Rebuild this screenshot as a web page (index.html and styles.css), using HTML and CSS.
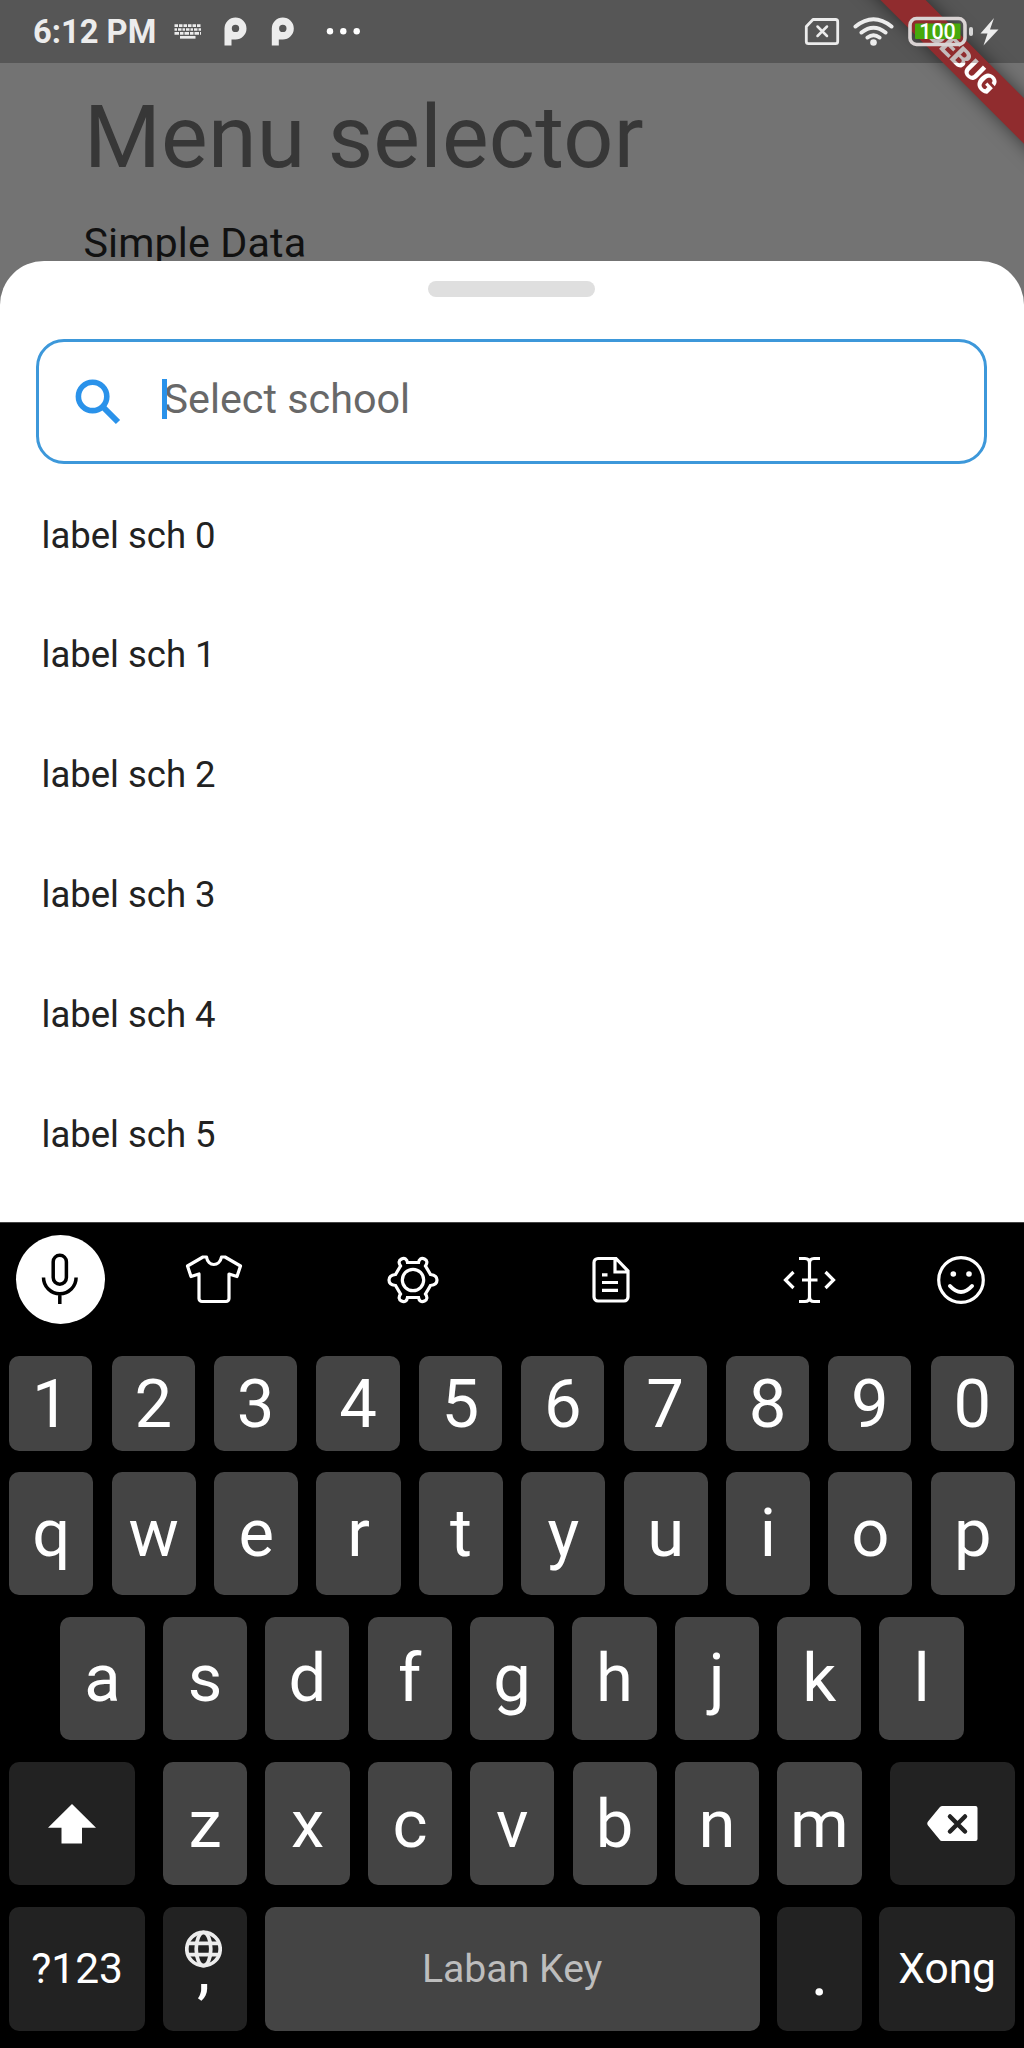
FILE: index.html
```html
<!DOCTYPE html>
<html lang="en">
<head>
<meta charset="utf-8">
<title>Menu selector</title>
<link rel="stylesheet" href="styles.css">
</head>
<body>
<div class="screen">
  <header class="status">
    <div class="debug-clip"><div class="debug"><span>DEBUG</span></div></div>
    <span class="time">6:12 PM</span>
    <svg class="status-left" width="190" height="32" viewBox="172 16 190 32" fill="#ececec">
      <g stroke="#ececec" stroke-width="2.700" fill="none">
        <path d="M174.500 25.700H201" stroke-dasharray="3.500 1"/>
        <path d="M174.500 29.500H201" stroke-dasharray="2.500 1 3.500 1"/>
        <path d="M174.500 33.300H201" stroke-dasharray="4.500 1 3.500 1"/>
        <path d="M180 37.300H195.500"/>
      </g>
      <path id="p-mark" fill-rule="evenodd" d="M224.500 45.500V28.500a11 11 0 1 1 11 11h-4v6zM235.500 24.700a3.700 3.700 0 1 0 0 7.400 3.700 3.700 0 0 0 0-7.400z"/>
      <use href="#p-mark" x="47.300"/>
      <g fill="#fff"><circle cx="330" cy="31.300" r="3.200"/><circle cx="343.300" cy="31.300" r="3.200"/><circle cx="356.700" cy="31.300" r="3.200"/></g>
    </svg>
    <div class="status-right">
      <svg width="196" height="32" viewBox="804 16 196 32">
        <g fill="none" stroke="#ececec" stroke-linecap="round">
          <path d="M813 19.500H835.500a2.200 2.200 0 0 1 2.200 2.200V41.500a2.200 2.200 0 0 1-2.200 2.200H808.500a2.200 2.200 0 0 1-2.200-2.200V26.500z" stroke-width="2.800" stroke-linejoin="round"/>
          <path d="M817.500 26.500l9.500 9.500m0-9.500l-9.500 9.500" stroke-width="2.500"/>
          <path d="M855.500 26.500q18-14.500 36 0M861.500 32.500q12-9.500 24 0M867.500 37.500q6-4.500 12 0" stroke-width="4"/>
        </g>
        <circle cx="873.500" cy="42.500" r="3.300" fill="#ececec"/>
        <rect x="910" y="18.500" width="55" height="26" rx="6.500" fill="none" stroke="#d9d3d3" stroke-width="3.600"/>
        <rect x="915" y="23.500" width="45.500" height="15.500" rx="1" fill="#46a80c"/>
        <rect x="969" y="27" width="4" height="9" rx="2" fill="#d6d6d6"/>
        <path d="M994 18L980.500 33.500h7L983.500 45.500L998.500 29.500h-8.500z" fill="#ececec"/>
        <text x="937.500" y="39.300" text-anchor="middle" class="charge">100</text>
      </svg>
    </div>
  </header>
  <section class="page">
    <h1>Menu selector</h1>
    <p>Simple Data</p>
  </section>
  <main class="sheet">
    <div class="handle"></div>
    <div class="search">
      <svg width="46" height="46" viewBox="0 0 46 46" fill="none" stroke="#2a92ea"><circle cx="17.600" cy="17.400" r="14.200" stroke-width="5.600"/><path d="M29 29L43 43" stroke-width="6"/></svg>
      <span class="field"><i class="caret"></i>Select school</span>
    </div>
    <ul>
      <li>label sch 0</li><li>label sch 1</li><li>label sch 2</li><li>label sch 3</li><li>label sch 4</li><li>label sch 5</li>
    </ul>
  </main>
  <section class="keyboard">
    <nav class="tools">
      <span class="mic"><svg width="40" height="54" viewBox="0 0 40 54" fill="none" stroke="#000" stroke-width="3.500"><rect x="13.200" y="3.200" width="13.200" height="29" rx="6.600"/><path d="M3.500 25.500a16.300 16.300 0 0 0 32.600 0M19.800 42V52"/></svg></span>
      <svg class="shirt" width="58" height="50" viewBox="0 0 58 50"><path d="M18 2L2.500 11L6 21.500L14 19V43.500a3 3 0 0 0 3 3H41a3 3 0 0 0 3-3V19L52 21.500L55.500 11L40 2H36.500C34.500 12 23 12 21.500 2z" stroke-linejoin="round"/></svg>
      <svg class="gear" width="52" height="50" viewBox="-26 -25 52 50"><circle r="10.700"/><path d="M-5.500 -17.500H5.500C6 -21 8.500 -22.500 11.500 -21C14.500 -19.500 14.500 -17 12.500 -14L17.500 -5.500C22 -5 24 -3.500 24 0C24 3.500 22 5 17.500 5.500L12.500 14C14.500 17 14.500 19.500 11.500 21C8.500 22.500 6 21 5.500 17.500H-5.500C-6 21 -8.500 22.500 -11.500 21C-14.500 19.500 -14.500 17 -12.500 14L-17.500 5.500C-22 5 -24 3.500 -24 0C-24 -3.500 -22 -5 -17.500 -5.500L-12.500 -14C-14.500 -17 -14.500 -19.500 -11.500 -21C-8.500 -22.500 -6 -21 -5.500 -17.500z"/></svg>
      <svg class="doc" width="38" height="48" viewBox="0 0 38 48"><path d="M24 2.500H6a4 4 0 0 0-4 4V41a4 4 0 0 0 4 4H32a4 4 0 0 0 4-4V15zM23 2.500V16H36M10 18.800h5.500M10 26.500H26M10 34.300H26"/></svg>
      <svg class="caret-tool" width="54" height="48" viewBox="0 0 54 48"><path d="M16 2.500h6q4.500 0 4.500 4.500V41q0 4.500-4.500 4.500h-6M37 2.500h-6q-4.500 0-4.500 4.500V41q0 4.500 4.500 4.500h6M19 24H34.500M10.500 16L2.500 24l8 8M42.500 16l8 8l-8 8"/></svg>
      <svg class="smile" width="50" height="50" viewBox="-25 -25 50 50"><circle r="22.300"/><path d="M-11 6Q0 18 11 6" stroke-width="4" stroke-linecap="round"/><g fill="#fff" stroke="none"><circle cx="-7.700" cy="-6" r="2.800"/><circle cx="8" cy="-6" r="2.800"/></g></svg>
    </nav>
    <div class="row digits"><b>1</b><b>2</b><b>3</b><b>4</b><b>5</b><b>6</b><b>7</b><b>8</b><b>9</b><b>0</b></div>
    <div class="row"><b>q</b><b>w</b><b>e</b><b>r</b><b>t</b><b>y</b><b>u</b><b>i</b><b>o</b><b>p</b></div>
    <div class="row inset"><b>a</b><b>s</b><b>d</b><b>f</b><b>g</b><b>h</b><b>j</b><b>k</b><b>l</b></div>
    <div class="row spread">
      <b class="dark wide"><svg width="48" height="40" viewBox="0 0 48 40"><path d="M24 0L48 23.700H34V39.500H13.500V23.700H0z" fill="#fff"/></svg></b>
      <div class="row middle"><b>z</b><b>x</b><b>c</b><b>v</b><b>b</b><b>n</b><b>m</b></div>
      <b class="dark wide"><svg width="52" height="36" viewBox="0 0 52 36"><path d="M15 0H48.500a2 2 0 0 1 2 2V33a2 2 0 0 1-2 2H15q-1.500 0-2.500-1.500L1 19.500q-1.500-2 0-4L12.500 1.500Q13.500 0 15 0z" fill="#fff"/><path d="M23 10.500L38 25.500M38 10.500L23 25.500" stroke="#222" stroke-width="4.500" stroke-linecap="round"/></svg></b>
    </div>
    <div class="row bottom">
      <b class="dark label fn">?123</b>
      <b class="dark comma"><svg width="37" height="38" viewBox="-18.500 -19 37 38" fill="none" stroke="#ececec" stroke-width="3.700"><circle r="16.700"/><ellipse rx="7.300" ry="16.700"/><path d="M-16 -5.700H16M-16 5.700H16"/></svg><span>,</span></b>
      <b class="label space">Laban Key</b>
      <b class="dark dot">.</b>
      <b class="dark label fn">Xong</b>
    </div>
  </section>
</div>
</body>
</html>
```
FILE: styles.css
```css
* { box-sizing: border-box; }
body { margin: 0; font-family: Roboto, sans-serif; }
.screen { display: flex; flex-direction: column; width: 1024px; height: 2048px; overflow: hidden; background: #737373; }
.debug-clip { position: absolute; top: 0; right: 0; width: 240px; height: 240px; overflow: hidden; }
.debug { position: absolute; left: 31.500px; top: 46.500px; width: 300px; height: 32px; transform: rotate(45deg); background: #902c2e; box-shadow: 0 0 17px rgba(0,0,0,.5); font-size: 27px; font-weight: 900; line-height: 32px; text-align: center; }
.debug span { display: block; padding-right: 10px; color: transparent; background: linear-gradient(135deg, #c4bcbc 50%, #fff 50%); background-clip: text; -webkit-background-clip: text; }
.status { position: relative; flex: none; display: flex; align-items: center; height: 62.500px; padding: 1px 24px 0 33px; background: #565656; }
.time { width: 139px; font-size: 32.700px; font-weight: 700; line-height: 62px; color: #ececec; white-space: nowrap; padding-top: 1px; }
.status-left, .status-right { position: relative; }
.status-right { margin-left: auto; height: 32px; }
.charge { font-size: 21.500px; font-weight: 500; fill: #fff; }
.page { flex: none; height: 198px; padding-left: 84px; }
h1 { margin: 0; padding-top: 24px; font-size: 88px; font-weight: 400; line-height: 100px; letter-spacing: .25px; color: #373737; }
.page p { margin: 31px 0 0 -.5px; font-size: 41.300px; line-height: 50px; letter-spacing: .1px; color: #111; }
.sheet { position: relative; flex: none; height: 961.500px; padding: 20.500px 37px 0 36px; border-radius: 44px 44px 0 0; background: #fff; }
.handle { width: 167px; height: 16px; margin: 0 auto; border-radius: 8px; background: #dfdfdf; }
.search { display: flex; align-items: flex-start; height: 125px; margin-top: 42px; padding: 36.500px 0 0 36px; border: 3px solid #3d98da; border-radius: 28px; }
.field { position: relative; margin-left: 42.500px; margin-top: -4.500px; font-size: 41.300px; line-height: 50px; color: #686868; }
.caret { position: absolute; left: -2px; top: 4.500px; width: 5.500px; height: 40px; background: #2a92ea; }
ul { list-style: none; margin: 11.500px 0 0; padding: 0 0 0 5.500px; }
li { height: 119.900px; line-height: 119.900px; font-size: 36.500px; color: #222; }
.keyboard { flex: 1; padding: 0 8.700px 0 9.300px; background: #000; border-top: 1px solid #444; }
.tools { display: flex; align-items: center; height: 133px; padding: 0 28px 18.500px 6.700px; }
.tools > svg { fill: none; stroke: #fff; stroke-width: 3.200; }
.mic { display: flex; align-items: center; justify-content: center; width: 89px; height: 89px; margin-top: -2px; border-radius: 50%; background: #fff; }
.shirt { margin-left: 80.500px; }
.gear { margin-left: 143.500px; }
.doc { margin-left: 153px; }
.caret-tool { margin-left: 153px; }
.smile { margin-left: 99px; }
.row { display: flex; gap: 18.200px; height: 123.500px; margin-bottom: 21.700px; }
.row b { display: flex; align-items: center; justify-content: center; flex: none; width: 84.200px; padding-top: 1px; border-radius: 10px; background: #444; color: #fff; font-size: 67px; font-weight: 400; line-height: 1; }
.digits { gap: 19.200px; height: 95px; margin-bottom: 20.500px; }
.row.digits b { width: 83.200px; padding-top: 2px; }
.inset { padding-left: 51.200px; }
.middle { margin: 0; }
.spread { justify-content: space-between; gap: 0; }
.row .dark { background: #222; }
.row .wide { width: 125.500px; padding: 0; }
.row .label { font-size: 42.500px; }
.bottom { gap: 17.800px; }
.row .fn { width: 135.500px; }
.row .space { width: 495px; color: #bdbdbd; font-size: 39.200px; }
.row .comma { flex-direction: column; justify-content: flex-start; padding: 23px 2px 0 0; }
.comma span { height: 67px; margin-top: -33px; }
.row .dot { padding-top: 8px; }
```
